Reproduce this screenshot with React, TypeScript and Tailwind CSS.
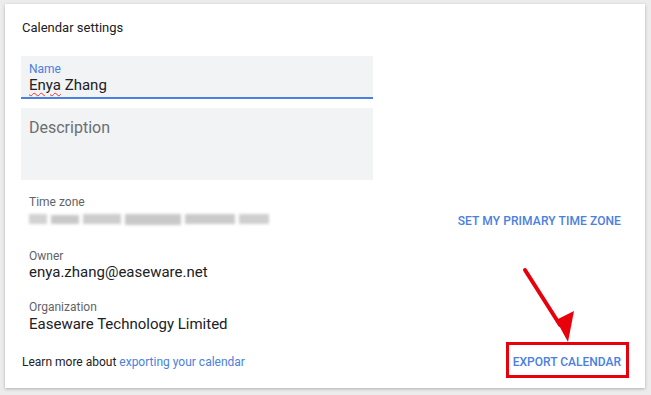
export default function App() {
  return (
    <div className="relative w-[651px] h-[395px] bg-[#ececec] pt-[4px] pl-[5px] font-['Roboto',sans-serif]">
      <div className="w-[640px] h-[384px] bg-white shadow-[0_1px_3px_rgba(0,0,0,0.25)] pl-[16px] pr-[24px] pt-[15px] flex flex-col">
        <div className="text-[13px] leading-[18px] text-[#202124] pl-[1px]">Calendar settings</div>

        {/* Name */}
        <div className="mt-[19px] w-[352px] h-[43px] bg-[#f1f3f4] border-b-2 border-[#4a80e0] px-[8px] pt-[6px]">
          <div className="text-[12px] leading-[14px] text-[#4a80e0]">Name</div>
          <div className="text-[15px] leading-[18px] text-[#202124]">
            <span className="underline decoration-wavy decoration-[#e33] decoration-1 underline-offset-2">Enya</span> Zhang
          </div>
        </div>

        {/* Description */}
        <div className="mt-[9px] w-[352px] h-[72px] bg-[#f1f3f4] px-[8px] pt-[10px]">
          <div className="text-[16px] leading-[20px] text-[#6b6e72]">Description</div>
        </div>

        {/* Time zone */}
        <div className="mt-[14px] flex items-end justify-between pl-[8px]">
          <div>
            <div className="text-[12px] leading-[16px] text-[#5f6368]">Time zone</div>
            <div className="mt-[3px] flex items-center gap-[4px] h-[12px] blur-[1.5px]">
              <div className="w-[18px] h-[10px] bg-[#d2d2d2]" />
              <div className="w-[28px] h-[9px] bg-[#c8c8c8]" />
              <div className="w-[38px] h-[10px] bg-[#cdcdcd]" />
              <div className="w-[56px] h-[11px] bg-[#c8c8c8]" />
              <div className="w-[50px] h-[10px] bg-[#cacaca]" />
              <div className="w-[30px] h-[10px] bg-[#cfcfcf]" />
            </div>
          </div>
          <button className="text-[12px] leading-[16px] font-medium text-[#4a80e0] uppercase tracking-[0.1px] mb-[-4px]">
            Set my primary time zone
          </button>
        </div>

        {/* Owner */}
        <div className="mt-[23px] pl-[8px]">
          <div className="text-[12px] leading-[16px] text-[#5f6368]">Owner</div>
          <div className="text-[15px] leading-[18px] text-[#202124] -mt-[1px]">enya.zhang@easeware.net</div>
        </div>

        {/* Organization */}
        <div className="mt-[18px] pl-[8px]">
          <div className="text-[12px] leading-[16px] text-[#5f6368]">Organization</div>
          <div className="text-[15px] leading-[18px] text-[#202124]">Easeware Technology Limited</div>
        </div>

        {/* Footer */}
        <div className="mt-[21px] flex items-center justify-between pl-[1px]">
          <div className="text-[12px] leading-[16px] text-[#202124]">
            Learn more about <span className="text-[#4a80e0]">exporting your calendar</span>
          </div>
          <button className="text-[12px] leading-[16px] font-medium text-[#4a80e0] uppercase">
            Export calendar
          </button>
        </div>
      </div>

      {/* annotation: arrow + red box */}
      <svg className="absolute left-0 top-0 pointer-events-none" width="651" height="395" viewBox="0 0 651 395">
        <line x1="525" y1="270" x2="560" y2="325" stroke="#e8000b" strokeWidth="4" strokeLinecap="round" />
        <polygon points="556,320 574,311 568,342" fill="#e8000b" />
        <rect x="507.5" y="343.5" width="120" height="33" fill="none" stroke="#e8000b" strokeWidth="3" />
      </svg>
    </div>
  )
}
